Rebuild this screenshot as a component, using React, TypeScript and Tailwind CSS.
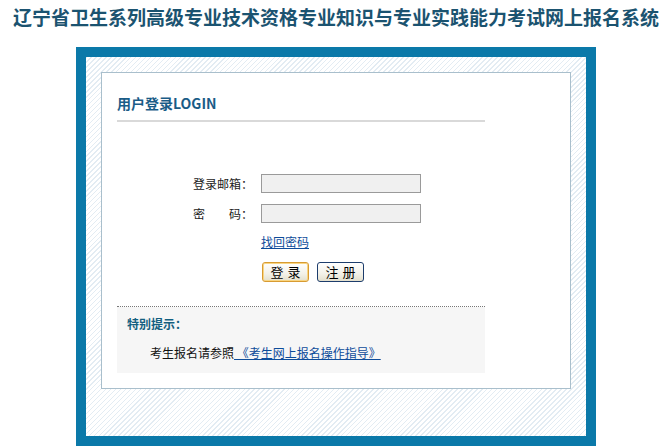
import React from "react";

const cjk = "font-['SimSun','Noto_Sans_CJK_SC',sans-serif]";

export default function App() {
  return (
    <div className={`w-[666px] h-[448px] bg-white overflow-hidden ${cjk} text-[12px] text-[#222]`}>
      <div className="h-[47px] pt-[7px] pl-[13px]">
        <h1 className="text-[19px] leading-[20px] font-bold text-[#1b5370] whitespace-nowrap tracking-[0px] font-['Noto_Sans_CJK_SC',sans-serif]">
          辽宁省卫生系列高级专业技术资格专业知识与专业实践能力考试网上报名系统
        </h1>
      </div>
      <div className="ml-[76px] w-[520px] h-[399px] border-[10px] border-[#0b79a9] bg-[repeating-linear-gradient(135deg,#e3ecf3_0px,#e3ecf3_1px,#ffffff_1px,#ffffff_3.5px)] pt-[15px] pl-[15px]">
        <div className="w-[470px] h-[317px] bg-white border border-[#a9bfcc] pt-[22px] pl-[15px]">
          <div className="w-[368px]">
            <div className="text-[14px] leading-[16px] font-bold text-[#1a5c87] font-['Noto_Sans_CJK_SC',sans-serif]">
              用户登录LOGIN
            </div>
            <div className="mt-[9px] h-[2px] bg-[#d9d9d9]" />
            <div className="pl-[76px] mt-[52px]">
              <div className="flex items-center h-[19px]">
                <span className="w-[68px] leading-[14px]">登录邮箱：</span>
                <input className="w-[160px] h-[19px] border border-[#9a9a9a] bg-[#f0f0f0] outline-none" />
              </div>
              <div className="flex items-center h-[19px] mt-[11px]">
                <span className="w-[68px] leading-[14px] flex">
                  <span>密</span>
                  <span className="ml-[24px]">码：</span>
                </span>
                <input type="password" className="w-[160px] h-[19px] border border-[#9a9a9a] bg-[#f0f0f0] outline-none" />
              </div>
              <div className="pl-[68px] mt-[12px] leading-[14px]">
                <a href="#" className="text-[#0e4c9a] underline">找回密码</a>
              </div>
              <div className="pl-[69px] mt-[13px] flex gap-[8px]">
                <button className="w-[47px] h-[20px] rounded-[3px] border border-[#d89b32] bg-[linear-gradient(#ffffff,#f3f1e8_60%,#e3dfcd)] shadow-[inset_0_0_0_1px_#f8d583] text-[13px] leading-[16px] text-black tracking-[4px] pl-[4px]">
                  登录
                </button>
                <button className="w-[47px] h-[20px] rounded-[3px] border border-[#1d3d6c] bg-[linear-gradient(#ffffff,#f3f1e8_60%,#e3dfcd)] text-[13px] leading-[16px] text-black tracking-[4px] pl-[4px]">
                  注册
                </button>
              </div>
            </div>
            <div className="mt-[24px] border-t border-dotted border-[#777]" />
            <div className="bg-[#f6f6f6] h-[66px] pt-[9px] pl-[10px]">
              <div className="font-bold text-[12px] leading-[16px] text-[#135f80] font-['Noto_Sans_CJK_SC',sans-serif]">特别提示：</div>
              <div className="mt-[13px] pl-[23px] leading-[16px] text-[#111]">
                考生报名请参照
                <a href="#" className="text-[#0e4c9a] underline"> 《考生网上报名操作指导》 </a>
              </div>
            </div>
          </div>
        </div>
      </div>
    </div>
  );
}
